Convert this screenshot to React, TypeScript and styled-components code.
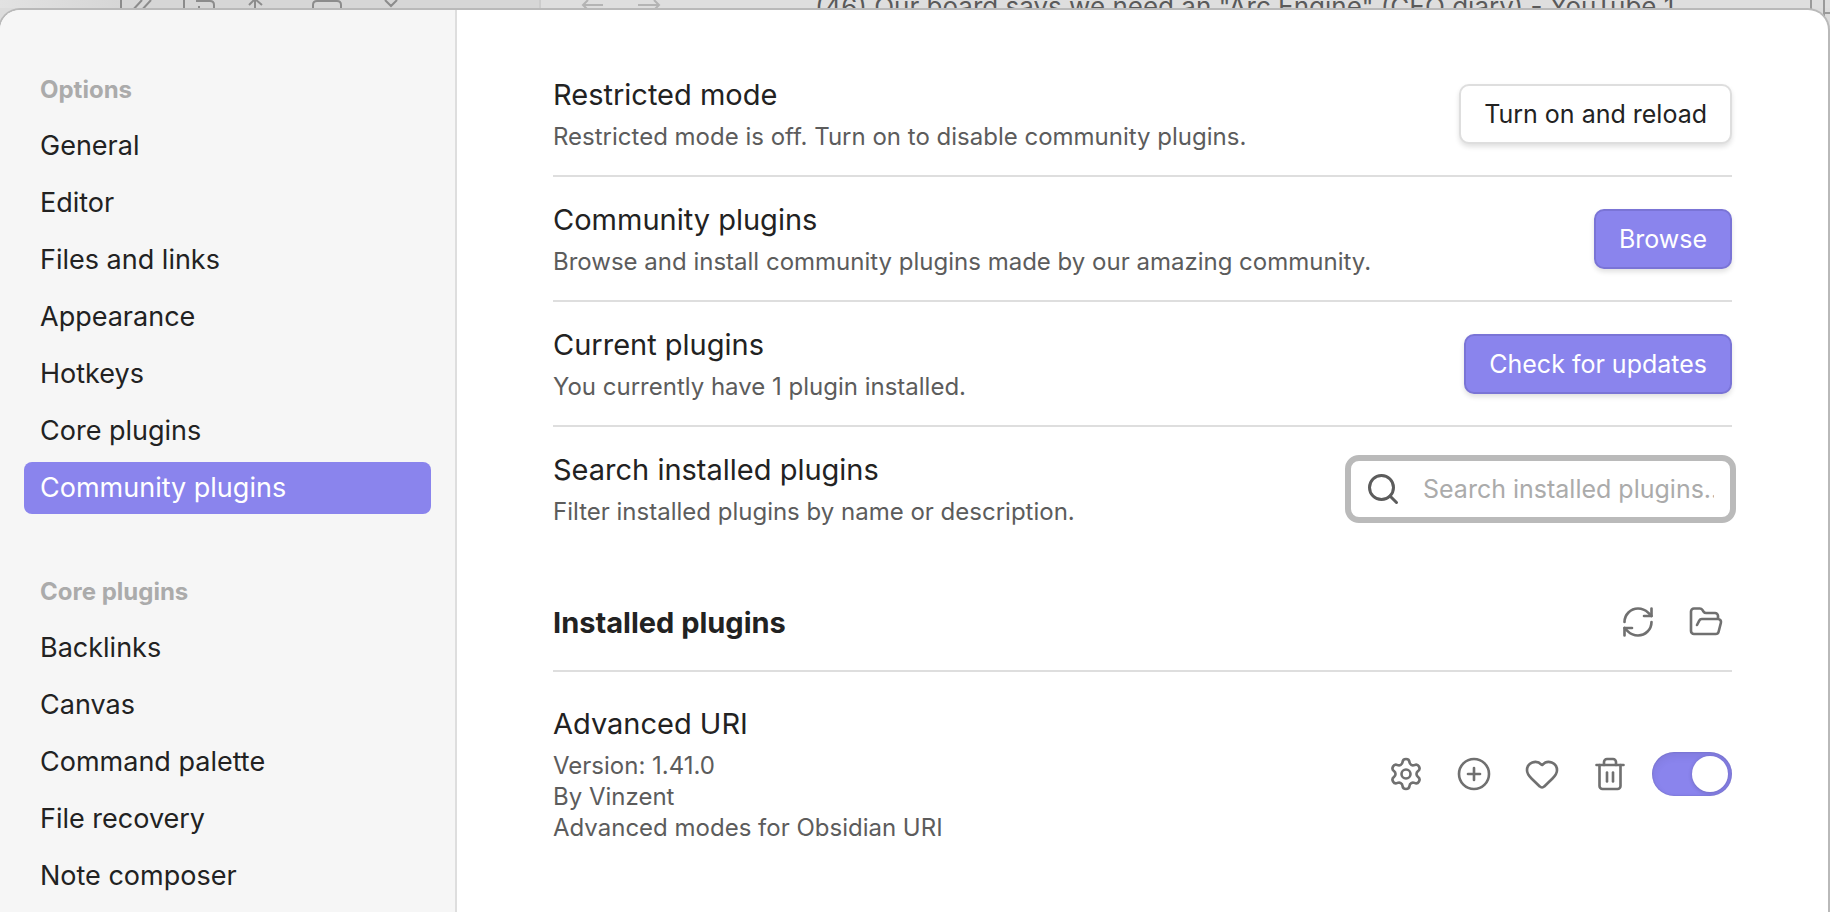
import React, { useState } from "react";
import styled, { createGlobalStyle, css } from "styled-components";
import {
  CirclePlus,
  FolderOpen,
  Heart,
  RefreshCw,
  Search,
  Settings,
  Trash2,
} from "lucide-react";

const GlobalStyle = createGlobalStyle`
  *, *::before, *::after { box-sizing: border-box; }
  body {
    margin: 0;
    background: #dcdcdc;
    color: #222222;
    font-family: Inter, "Liberation Sans", sans-serif;
    overflow: hidden;
  }
  button, input { font-family: inherit; }
`;

const Screen = styled.div`
  height: 100vh;
  display: flex;
  flex-direction: column;
  overflow: hidden;
`;

const TitleBar = styled.header`
  position: relative;
  flex: none;
  display: flex;
  height: 8px;
  background: linear-gradient(90deg, #e2e2e2, #d6d6d6 120px, #d6d6d6 540px, #dedede 540px);
`;

const TitleDrawing = styled.svg`
  display: block;
  flex: none;
  width: 700px;
  height: 30px;
`;

const WindowTitle = styled.div`
  flex: 1;
  padding-left: 115px;
  margin-top: -5px;
  font-size: 26px;
  line-height: 24px;
  color: #5a5a5a;
  white-space: nowrap;
`;

const CornerDrawing = styled.svg`
  display: block;
  flex: none;
  width: 24px;
  height: 30px;
`;

const Modal = styled.div`
  position: relative;
  flex: 1;
  min-height: 0;
  display: flex;
  margin-left: -2px;
  border: 2px solid #b9b9b9;
  border-bottom: 0;
  border-radius: 22px 22px 0 0;
  background: #ffffff;
  overflow: hidden;
`;

const Sidebar = styled.nav`
  flex: none;
  width: 457px;
  padding: 66px 24px 0;
  background: #f6f6f6;
  border-right: 2px solid #dedede;
`;

const NavGroup = styled.section`
  margin-bottom: 64px;
`;

const NavHeading = styled.h2`
  margin: 0 0 16px;
  padding: 0 16px;
  font-size: 24px;
  line-height: 28px;
  font-weight: 700;
  color: #ababab;
`;

const NavList = styled.ul`
  display: flex;
  flex-direction: column;
  gap: 5px;
  margin: 0;
  padding: 0;
  list-style: none;
`;

const NavItem = styled.a<{ $active: boolean }>`
  display: block;
  padding: 10px 16px;
  border-radius: 8px;
  font-size: 27px;
  line-height: 32px;
  text-decoration: none;
  color: ${(p) => (p.$active ? "#ffffff" : "#222222")};
  background: ${(p) => (p.$active ? "#8a84ed" : "transparent")};
`;

const Content = styled.main`
  flex: 1;
  min-width: 0;
  padding: 42px 96px 0;
`;

const Setting = styled.section<{ $divided?: boolean }>`
  display: flex;
  align-items: center;
  justify-content: space-between;
  gap: 32px;
  padding: 23px 0;
  border-bottom: ${(p) => (p.$divided ? "2px solid #dedede" : "0")};
`;

const SettingName = styled.h3`
  margin: 0 0 7px;
  font-size: 29px;
  line-height: 39px;
  font-weight: 400;
`;

const SettingText = styled.p`
  margin: 0;
  font-size: 24px;
  line-height: 31px;
  color: #5c5c5c;
`;

const Button = styled.button<{ $accent?: boolean }>`
  flex: none;
  height: 60px;
  padding: 0 23px;
  border-radius: 10px;
  font-size: 25px;
  cursor: pointer;
  box-shadow: 0 3px 5px rgba(0, 0, 0, 0.12);
  ${(p) =>
    p.$accent
      ? css`
          color: #ffffff;
          background: #8a84ed;
          border: 2px solid #7a74d6;
        `
      : css`
          color: #222222;
          background: #ffffff;
          border: 2px solid #dedede;
        `}
`;

const SearchBox = styled.label`
  display: flex;
  align-items: center;
  gap: 22px;
  width: 391px;
  height: 68px;
  margin-right: -4px;
  padding: 0 16px 0 14px;
  border: 6px solid #bababa;
  border-radius: 14px;
  color: #5c5c5c;
`;

const SearchInput = styled.input`
  flex: 1;
  min-width: 0;
  padding: 0;
  border: 0;
  outline: 0;
  background: transparent;
  font-size: 25px;
  color: #222222;
  &::placeholder { color: #ababab; }
`;

const SectionHeader = styled.div`
  display: flex;
  align-items: center;
  justify-content: space-between;
  height: 98px;
  margin: 24px 0 9px;
  border-bottom: 2px solid #dedede;
`;

const SectionTitle = styled.h2`
  margin: 0;
  font-size: 29px;
  line-height: 39px;
  font-weight: 700;
`;

const Actions = styled.div`
  display: flex;
  align-items: center;
`;

const IconButton = styled.button`
  display: flex;
  align-items: center;
  justify-content: center;
  width: 52px;
  height: 52px;
  margin-left: 16px;
  padding: 0;
  border: 0;
  background: transparent;
  color: #707070;
  cursor: pointer;
`;

const Toggle = styled.input`
  appearance: none;
  display: flex;
  align-items: center;
  width: 80px;
  height: 44px;
  margin: 0 0 0 16px;
  padding: 0 4px;
  border-radius: 22px;
  background: #bdbdbd;
  box-shadow: inset 0 4px 8px rgba(0, 0, 0, 0.07), inset 0 0 2px rgba(0, 0, 0, 0.2);
  cursor: pointer;
  &::before {
    content: "";
    width: 36px;
    height: 36px;
    border-radius: 50%;
    background: #ffffff;
    box-shadow: 0 1px 4px rgba(0, 0, 0, 0.2);
  }
  &:checked {
    justify-content: flex-end;
    background: #8a84ed;
  }
`;

const groups = [
  {
    title: "Options",
    items: ["General", "Editor", "Files and links", "Appearance", "Hotkeys", "Core plugins", "Community plugins"],
  },
  {
    title: "Core plugins",
    items: ["Backlinks", "Canvas", "Command palette", "File recovery", "Note composer"],
  },
];

const pluginActions = [
  { label: "Options", Icon: Settings },
  { label: "Hotkeys", Icon: CirclePlus },
  { label: "Donate", Icon: Heart },
  { label: "Uninstall", Icon: Trash2 },
];

export default function App() {
  const [page, setPage] = useState("Options/Community plugins");
  const [enabled, setEnabled] = useState(true);
  const [query, setQuery] = useState("");

  return (
    <Screen>
      <GlobalStyle />
      <TitleBar>
        <TitleDrawing viewBox="0 0 700 30" fill="none" stroke="#8c8c8c" strokeWidth="2" aria-hidden="true">
          <path d="M121 0V12M131 12L142 0M140 12L151 0M184 0V12M196 1H210Q214 1 214 5V12M199 6V12M255 0V12M249 5L255 -1L262 5M313 12V5Q313 1 317 1H337Q341 1 341 5V12M385 0L391 6L397 0" />
          <path d="M540 0V12" stroke="#cccccc" />
          <path d="M603 5H584M588 0L583 5L588 10M638 5H658M654 0L659 5L654 10" stroke="#b4b4b4" />
        </TitleDrawing>
        <WindowTitle>(46) Our board says we need an "Arc Engine" (CEO diary) - YouTube 1</WindowTitle>
        <CornerDrawing viewBox="0 0 24 30" fill="none" stroke="#9a9a9a" strokeWidth="2" aria-hidden="true">
          <path d="M5 0V12M18 0V30M18 13H24" />
        </CornerDrawing>
      </TitleBar>
      <Modal>
        <Sidebar aria-label="Settings">
          {groups.map((group) => (
            <NavGroup key={group.title}>
              <NavHeading>{group.title}</NavHeading>
              <NavList>
                {group.items.map((item) => {
                  const id = `${group.title}/${item}`;
                  return (
                    <li key={id}>
                      <NavItem href="#" $active={page === id} onClick={() => setPage(id)}>
                        {item}
                      </NavItem>
                    </li>
                  );
                })}
              </NavList>
            </NavGroup>
          ))}
        </Sidebar>
        <Content>
          <Setting $divided>
            <div>
              <SettingName>Restricted mode</SettingName>
              <SettingText>Restricted mode is off. Turn on to disable community plugins.</SettingText>
            </div>
            <Button>Turn on and reload</Button>
          </Setting>
          <Setting $divided>
            <div>
              <SettingName>Community plugins</SettingName>
              <SettingText>Browse and install community plugins made by our amazing community.</SettingText>
            </div>
            <Button $accent>Browse</Button>
          </Setting>
          <Setting $divided>
            <div>
              <SettingName>Current plugins</SettingName>
              <SettingText>You currently have 1 plugin installed.</SettingText>
            </div>
            <Button $accent>Check for updates</Button>
          </Setting>
          <Setting>
            <div>
              <SettingName>Search installed plugins</SettingName>
              <SettingText>Filter installed plugins by name or description.</SettingText>
            </div>
            <SearchBox>
              <Search size={36} strokeWidth={2} />
              <SearchInput
                type="text"
                aria-label="Search installed plugins"
                placeholder="Search installed plugins..."
                value={query}
                onChange={(e) => setQuery(e.target.value)}
              />
            </SearchBox>
          </Setting>
          <SectionHeader>
            <SectionTitle>Installed plugins</SectionTitle>
            <Actions>
              <IconButton aria-label="Reload plugins">
                <RefreshCw size={36} strokeWidth={1.75} />
              </IconButton>
              <IconButton aria-label="Open plugins folder">
                <FolderOpen size={36} strokeWidth={1.75} />
              </IconButton>
            </Actions>
          </SectionHeader>
          <Setting>
            <div>
              <SettingName>Advanced URI</SettingName>
              <SettingText>Version: 1.41.0</SettingText>
              <SettingText>By Vinzent</SettingText>
              <SettingText>Advanced modes for Obsidian URI</SettingText>
            </div>
            <Actions>
              {pluginActions.map(({ label, Icon }) => (
                <IconButton key={label} aria-label={label}>
                  <Icon size={36} strokeWidth={1.75} />
                </IconButton>
              ))}
              <Toggle
                type="checkbox"
                aria-label="Enable Advanced URI"
                checked={enabled}
                onChange={(e) => setEnabled(e.target.checked)}
              />
            </Actions>
          </Setting>
        </Content>
      </Modal>
    </Screen>
  );
}
